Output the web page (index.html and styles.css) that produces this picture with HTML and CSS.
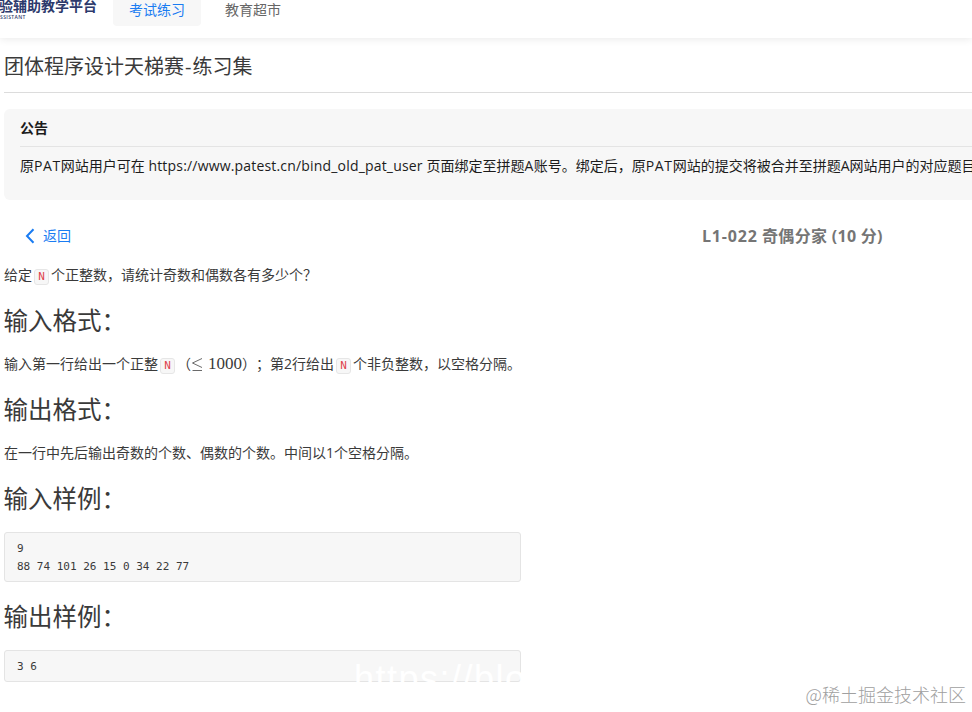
FILE: index.html
```html
<!DOCTYPE html>
<html lang="zh-CN">
<head>
<meta charset="utf-8">
<title>L1-022 奇偶分家</title>
<link rel="stylesheet" href="styles.css">
</head>
<body>
<header class="topbar">
  <div class="brand">
    <div class="brand-name">验辅助教学平台</div>
    <div class="brand-sub">SSISTANT</div>
  </div>
  <nav class="nav">
    <a class="nav-item active">考试练习</a>
    <a class="nav-item">教育超市</a>
  </nav>
</header>
<main class="page">
  <h1 class="title">团体程序设计天梯赛<span class="dash">-</span>练习集</h1>
  <section class="notice">
    <div class="notice-head">公告</div>
    <p class="notice-body">原<span class="pat">PAT</span>网站用户可在 <span class="url">https://www.patest.cn/bind_old_pat_user</span> 页面绑定至拼题<span class="pat">A</span>账号。绑定后，原<span class="pat">PAT</span>网站的提交将被合并至拼题A网站用户的对应题目</p>
  </section>
  <div class="problem-bar">
    <a class="back"><svg class="chevron" viewBox="0 0 10 16"><path d="M8.5 1.2 2 8l6.500 6.800"/></svg>返回</a>
    <h2 class="problem-title"><span class="code-no">L1-022</span> 奇偶分家 (10 分)</h2>
  </div>
  <article class="content">
    <p>给定<code>N</code>个正整数，请统计奇数和偶数各有多少个？</p>
    <h3>输入格式：</h3>
    <p>输入第一行给出一个正整<code>N</code>（<span class="math"><svg class="leq" viewBox="0 0 12 16"><path d="M11 1.500 1.500 6l9.500 4.500M1.500 13.500H11"/></svg>1000</span>）；第2行给出<code>N</code>个非负整数，以空格分隔。</p>
    <h3>输出格式：</h3>
    <p>在一行中先后输出奇数的个数、偶数的个数。中间以1个空格分隔。</p>
    <h3>输入样例：</h3>
    <pre>9
88 74 101 26 15 0 34 22 77</pre>
    <h3>输出样例：</h3>
    <pre>3 6</pre>
  </article>
</main>
<div class="overlay-url">https://blog</div>
<div class="watermark">@稀土掘金技术社区</div>
</body>
</html>
```
FILE: styles.css
```css
* { box-sizing: border-box; }
body {
  margin: 0;
  width: 972px;
  height: 712px;
  overflow: hidden;
  position: relative;
  background: #fff;
  color: #3a3a3a;
  font: 14px/20px "Open Sans", "Noto Sans CJK SC", sans-serif;
  text-spacing-trim: space-all;
}
h1, h2, h3, p, pre { margin: 0; font-weight: 400; }
.topbar {
  height: 38px;
  display: flex;
  align-items: flex-start;
  box-shadow: 0 1px 8px rgba(0, 0, 0, .09);
}
.brand { width: 113px; color: #2d3a6c; white-space: nowrap; }
.brand-name { height: 13px; margin-left: -1px; font-size: 14px; line-height: 11px; font-weight: 700; }
.brand-sub { font-size: 5px; line-height: 8px; font-weight: 600; letter-spacing: .4px; }
.nav { display: flex; gap: 8px; }
.nav-item {
  height: 26px;
  padding: 0 16px;
  line-height: 20px;
  color: #666;
  border-radius: 0 0 4px 4px;
}
.nav-item.active { background: #f7f7f7; color: #1a7cf2; }
.page { padding-left: 4px; }
.title {
  height: 55px;
  font-size: 20px;
  line-height: 57px;
  border-bottom: 1px solid #dcdcdc;
}
.dash { padding: 0 1px; }
.notice {
  height: 91px;
  margin-top: 16px;
  padding-left: 16px;
  background: #f7f7f7;
  border-radius: 6px 0 0 6px;
  color: #1c1c1c;
  overflow: hidden;
}
.notice-head {
  height: 38px;
  line-height: 38px;
  font-weight: 700;
  border-bottom: 1px solid #e4e4e4;
}
.notice-body { line-height: 38px; white-space: nowrap; }
.pat { letter-spacing: .6px; }
.url { letter-spacing: .18px; }
.problem-bar {
  height: 72px;
  display: grid;
  grid-template-columns: 698px 1fr;
  align-items: center;
}
.back { display: flex; align-items: center; gap: 8px; padding-left: 21px; color: #1a7cf2; }
.chevron { width: 10px; height: 16px; fill: none; stroke: currentColor; stroke-width: 2; }
.problem-title { font-size: 16px; line-height: 24px; font-weight: 700; color: #757575; white-space: nowrap; letter-spacing: .3px; }
.code-no { letter-spacing: .8px; }
.content p { height: 24px; margin-top: -9px; margin-bottom: 14px; line-height: 24px; white-space: nowrap; }
.content h3 { margin-left: -.5px; font-size: 24.500px; height: 37px; line-height: 39px; margin-bottom: 23px; }
.content p + h3 { margin-top: 14px; }
code {
  display: inline-block;
  height: 16px;
  width: 15px;
  margin: 0 2px;
  border: 1px solid #e6e6e6;
  border-radius: 3px;
  background: #f7f7f7;
  color: #e0434d;
  font: 11px/14px "DejaVu Sans Mono", monospace;
  text-align: center;
  position: relative;
  top: -2px;
  vertical-align: -2px;
}
.math { font: 17px/20px "Liberation Serif", serif; }
.leq { width: 12px; height: 16px; margin-right: 5px; vertical-align: -4px; fill: none; stroke: #444; stroke-width: .8; }
pre {
  width: 517px;
  padding: 7px 12px 5px;
  border: 1px solid #e4e4e4;
  border-radius: 3px;
  background: #f7f7f7;
  font: 11px/18px "DejaVu Sans Mono", monospace;
}
.content pre { margin-top: -7px; margin-bottom: 15px; }
.overlay-url {
  position: absolute;
  left: 354px;
  top: 659px;
  height: 34px;
  color: #fff;
  font: 36px/40px "Liberation Sans", sans-serif;
  letter-spacing: 1.5px;
}
.watermark {
  position: absolute;
  right: 6px;
  top: 682px;
  color: #a0a0a0;
  font: 300 18px/24px "Noto Sans CJK SC", sans-serif;
}
```
